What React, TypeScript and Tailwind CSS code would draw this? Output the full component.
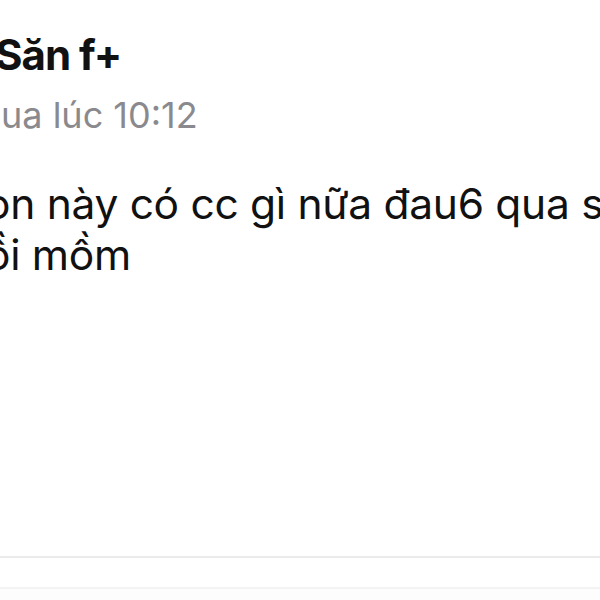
export default function App() {
  return (
    <div
      className="w-[600px] h-[600px] overflow-hidden bg-white flex flex-col relative"
      style={{ fontFamily: 'Inter, "Noto Sans", sans-serif' }}
    >
      <div className="pt-[34px] ml-[-5px] text-[42px] leading-none font-bold tracking-[-1px] text-[#111111] whitespace-nowrap">
        Săn f+
      </div>
      <div className="mt-[21px] ml-[1px] text-[36px] leading-none text-[#8a8a8e] whitespace-nowrap">
        ua lúc 10:12
      </div>
      <div className="mt-[45px] ml-[-15px] text-[42.5px] leading-[51px] tracking-[-0.3px] text-[#111111] whitespace-nowrap">
        <div>on này có cc gì nữa đau6 qua sao</div>
        <div>ồi mồm</div>
      </div>
      <div className="flex-1" />
      <div className="h-[2px] bg-[#ebebeb]" />
      <div className="h-[29px]" />
      <div className="h-[2px] bg-[#f3f3f3]" />
      <div className="h-[11px] bg-[#fdfdfd]" />
    </div>
  );
}
